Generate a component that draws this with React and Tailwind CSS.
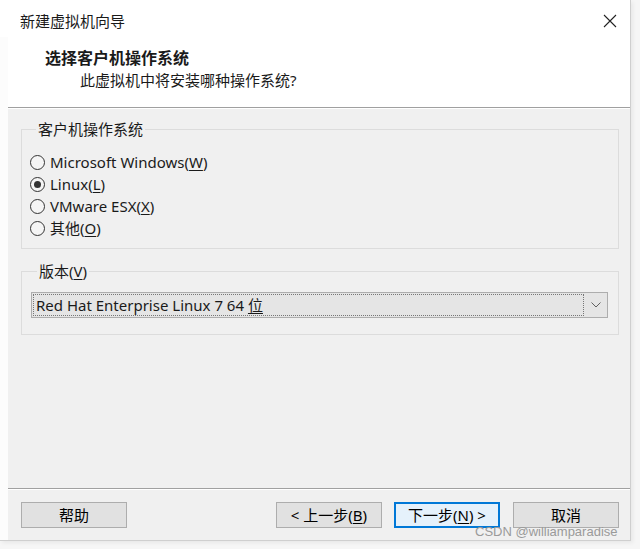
import React from 'react';

const font = { fontFamily: '"Noto Sans", "Noto Sans CJK SC", sans-serif' };

const Mn = ({ children }) => <span className="underline underline-offset-2">{children}</span>;

const Radio = ({ checked, children }) => (
  <label className="flex items-center h-[22px] gap-[5px]">
    <span className="w-[15px] h-[15px] rounded-full border border-[#333333] bg-[#f5f5f5] flex items-center justify-center">
      {checked && <span className="w-[7px] h-[7px] rounded-full bg-[#333333]" />}
    </span>
    <span>{children}</span>
  </label>
);

const Button = ({ children, primary }) => (
  <button
    className={
      primary
        ? 'w-[106px] h-[26px] bg-[#e5f1fb] border-2 border-[#0078d7] text-[15px] leading-none text-black'
        : 'w-[106px] h-[26px] bg-[#e1e1e1] border border-[#adadad] text-[15px] leading-none text-black'
    }
  >
    {children}
  </button>
);

const App = () => {
  return (
    <div className="w-[640px] h-[549px] bg-[#f6f6f6] overflow-hidden relative text-[#1a1a1a]" style={font}>
      <div className="w-[631px] h-[541px] bg-[#fcfcfc] border-r border-b border-[#cfcfcf] flex flex-col shadow-[2px_2px_4px_rgba(0,0,0,0.06)]">
        {/* Title bar */}
        <div className="h-[37px] bg-white flex items-start justify-between pl-[20px] pr-[13px] pt-[10px]">
          <span className="text-[15px] leading-[22px]">新建虚拟机向导</span>
          <svg width="14" height="14" viewBox="0 0 14 14" className="mt-[4px]">
            <path d="M1 1 L13 13 M13 1 L1 13" stroke="#222" strokeWidth="1.1" fill="none" />
          </svg>
        </div>

        <div className="ml-[8px] flex-1 flex flex-col">
          {/* Header */}
          <div className="h-[71px] bg-white pt-[10px] border-b border-[#a0a0a0]">
            <div className="pl-[37px] text-[16px] font-bold leading-[22px]">选择客户机操作系统</div>
            <div className="pl-[72px] text-[15px] leading-[22px]">此虚拟机中将安装哪种操作系统?</div>
          </div>

          {/* Body */}
          <div className="flex-1 bg-[#f0f0f0] border-t border-white pl-[13px] pr-[11px] pt-[10px] text-[15px] border-b border-b-[#a0a0a0]">
            <fieldset className="border border-[#dcdcdc] pt-[12px] pb-[9px] pl-[8px]">
              <legend className="ml-[6px] px-[2px] leading-[20px]">客户机操作系统</legend>
              <Radio>Microsoft Windows(<Mn>W</Mn>)</Radio>
              <Radio checked>Linux(<Mn>L</Mn>)</Radio>
              <Radio>VMware ESX(<Mn>X</Mn>)</Radio>
              <Radio>其他(<Mn>O</Mn>)</Radio>
            </fieldset>

            <fieldset className="mt-[12px] border border-[#dcdcdc] pt-[11px] pb-[16px] pl-[9px] pr-[10px]">
              <legend className="ml-[6px] px-[2px] leading-[20px]">版本(<Mn>V</Mn>)</legend>
              <div className="h-[26px] bg-[#e5e5e5] border border-[#adadad] flex items-center">
                <div className="flex-1 h-[22px] ml-[1px] border border-dotted border-[#777] flex items-center pl-[2px]">
                  <span className="leading-none">Red Hat Enterprise Linux 7 64 <Mn>位</Mn></span>
                </div>
                <div className="w-[23px] flex items-center justify-center">
                  <svg width="10" height="6" viewBox="0 0 10 6">
                    <path d="M0.5 0.5 L5 5 L9.5 0.5" stroke="#606060" strokeWidth="1" fill="none" />
                  </svg>
                </div>
              </div>
            </fieldset>
          </div>

          {/* Footer */}
          <div className="h-[51px] bg-[#f0f0f0] border-t border-white flex items-center pl-[13px] pr-[11px]">
            <Button>帮助</Button>
            <div className="flex-1" />
            <div className="flex gap-[12px]">
              <Button>&lt; 上一步(<Mn>B</Mn>)</Button>
              <Button primary>下一步(<Mn>N</Mn>) &gt;</Button>
              <div className="ml-[1px]">
                <Button>取消</Button>
              </div>
            </div>
          </div>
        </div>
      </div>

      {/* Watermark */}
      <div
        className="absolute left-[475px] top-[522px] text-[13px] leading-[20px] text-[#9a9a9a]"
        style={{ fontFamily: '"Liberation Sans", sans-serif' }}
      >
        CSDN @williamparadise
      </div>
    </div>
  );
};

export default App;
